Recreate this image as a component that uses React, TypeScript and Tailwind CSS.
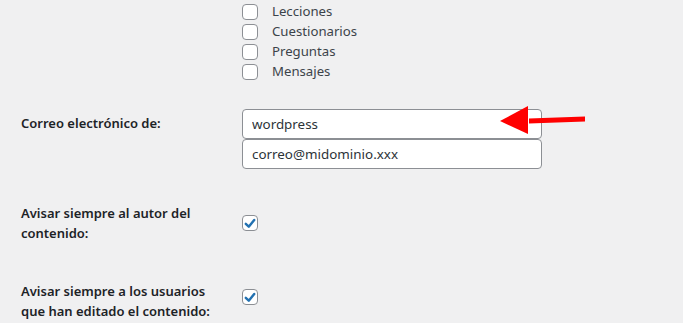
import { useState } from "react";

const types = ["Lecciones", "Cuestionarios", "Preguntas", "Mensajes"];

function Box({ checked }: { checked?: boolean }) {
  return (
    <span className="flex h-4 w-4 shrink-0 items-center justify-center rounded-[4px] border border-[#8c8f94] bg-white">
      {checked && (
        <svg viewBox="0 0 16 16" className="h-[15px] w-[15px]">
          <path d="M3.2 8.4 L6.6 11.6 L12.8 4" fill="none" stroke="#2271b1" strokeWidth="2.8" strokeLinecap="round" strokeLinejoin="round" />
        </svg>
      )}
    </span>
  );
}

export default function App() {
  const [name, setName] = useState("wordpress");
  const [mail, setMail] = useState("correo@midominio.xxx");

  return (
    <div className="relative h-[323px] w-[683px] overflow-hidden bg-[#f0f0f1] text-[13.2px] text-[#3c434a]" style={{ fontFamily: '"Segoe UI", "Noto Sans", sans-serif' }}>
      {/* post type list */}
      <div className="flex flex-col pl-[242px] pt-[2px]">
        {types.map((t) => (
          <label key={t} className="flex h-5 items-center gap-[14px] leading-5">
            <Box />
            <span className="-mt-[2px]">{t}</span>
          </label>
        ))}
      </div>

      {/* from address */}
      <div className="mt-[27px] flex">
        <div className="w-[242px] pl-[21px] pt-[4px] text-[13px] font-semibold leading-5 text-[#1d2327]">Correo electrónico de:</div>
        <div className="flex flex-col">
          <input
            value={name}
            onChange={(e) => setName(e.target.value)}
            className="h-[30px] w-[300px] rounded-[4px] border border-[#8c8f94] bg-white px-[9px] text-[13.4px] text-[#2c3338] outline-none"
          />
          <input
            value={mail}
            onChange={(e) => setMail(e.target.value)}
            className="h-[30px] w-[300px] rounded-[4px] border border-[#8c8f94] bg-white px-[9px] text-[13.4px] text-[#2c3338] outline-none"
          />
        </div>
      </div>

      {/* notify author */}
      <div className="mt-[34px] flex">
        <div className="w-[242px] pl-[21px] pr-4 text-[13px] font-semibold leading-5 text-[#1d2327]">Avisar siempre al autor del contenido:</div>
        <div className="pt-[12px]">
          <Box checked />
        </div>
      </div>

      {/* notify editors */}
      <div className="mt-[38px] flex">
        <div className="w-[242px] pl-[21px] pr-4 text-[13px] font-semibold leading-5 text-[#1d2327]">Avisar siempre a los usuarios que han editado el contenido:</div>
        <div className="pt-[8px]">
          <Box checked />
        </div>
      </div>

      {/* annotation arrow */}
      <svg className="pointer-events-none absolute left-[495px] top-[100px]" width="100" height="40" viewBox="0 0 100 40">
        <path d="M34 18.5 L90 16.5 L90 21.5 L34 23.5 Z" fill="#ff0000" />
        <path d="M5 21 L33 6 L33 34 Z" fill="#ff0000" />
      </svg>
    </div>
  );
}
